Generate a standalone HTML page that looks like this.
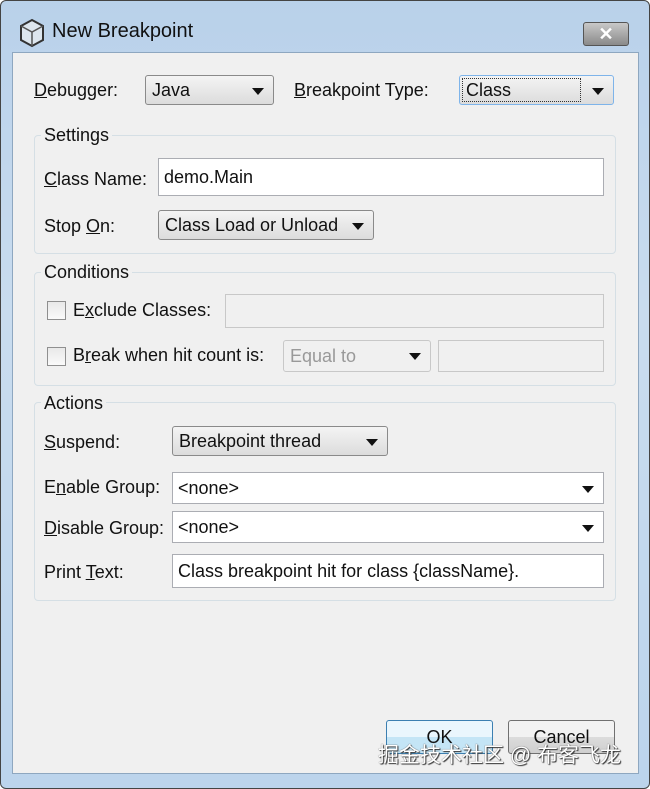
<!DOCTYPE html>
<html><head><style>
body{margin:0;width:650px;height:789px;overflow:hidden;font-family:"Liberation Sans","Noto Sans CJK SC",sans-serif;font-size:18px;color:#111}
.frame{position:absolute;left:0;top:0;width:648px;height:787px;border:1px solid #444;border-radius:6px;background:linear-gradient(#b9d1ea,#c9dcef 40%,#bcd4ec)}
.client{position:absolute;left:12px;top:52px;width:625px;height:720px;background:#f0f0f0;border:1px solid #8ea7c0}
.a{position:absolute}
.combo{position:absolute;height:30px;border:1px solid #8a8a8a;border-radius:3px;background:linear-gradient(#f4f4f4,#dcdcdc);box-sizing:border-box;padding:3px 6px;line-height:22px}
.combo:after{content:"";position:absolute;right:9px;top:12px;border:6px solid transparent;border-top:7px solid #111;border-bottom:0}
.field{position:absolute;height:38px;border:1px solid #abadb3;background:#fff;box-sizing:border-box;padding:0 5px;line-height:36px}
.dis{background:#f0f0f0;border-color:#c8c8c8}
.grp{position:absolute;border:1px solid #d5dfe5;border-radius:4px}
.gl{position:absolute;background:#f0f0f0;padding:0 3px}
.cb{position:absolute;width:17px;height:17px;border:1px solid #8f8f8f;background:linear-gradient(#e8e8e8,#fafafa)}
.ecombo{position:absolute;height:32px;border:1px solid #abadb3;background:#fff;box-sizing:border-box;padding:0 5px;line-height:30px}
.ecombo:after{content:"";position:absolute;right:9px;top:13px;border:6px solid transparent;border-top:7px solid #111;border-bottom:0}
.btn{position:absolute;width:107px;height:34px;border:1px solid #707070;border-radius:3px;background:linear-gradient(#f2f2f2 50%,#dcdcdc 50%,#cfcfcf);box-sizing:border-box;text-align:center;line-height:32px}
u{text-decoration:underline}
</style></head><body>
<div class="frame"></div>
<svg class="a" style="left:18px;top:18px" width="28" height="30" viewBox="0 0 28 30"><path d="M14 2 L25 8 L25 22 L14 28 L3 22 L3 8Z" fill="#dde6ee" stroke="#333" stroke-width="2"/><path d="M3 8 L14 14 L25 8 M14 14 V28" fill="none" stroke="#555" stroke-width="1.5"/></svg>
<div class="a" style="left:52px;top:20px;font-size:20px">New Breakpoint</div>
<div class="a" style="left:583px;top:22px;width:44px;height:22px;border:1px solid #555;border-radius:3px;background:linear-gradient(#c8c8c8,#8a8a8a);color:#fff;text-align:center;font-weight:bold;line-height:22px;font-size:18px">✕</div>
<div class="client"></div>
<div class="a" style="left:34px;top:80px"><u>D</u>ebugger:</div>
<div class="combo" style="left:145px;top:75px;width:129px">Java</div>
<div class="a" style="left:294px;top:80px"><u>B</u>reakpoint Type:</div>
<div class="combo" style="left:459px;top:75px;width:155px;border-color:#7eb4ea"><div style="position:absolute;left:3px;top:3px;width:114px;height:22px;outline:1px dotted #333;padding-left:3px">Class</div></div>

<div class="grp" style="left:34px;top:135px;width:580px;height:117px"></div>
<div class="gl" style="left:41px;top:125px">Settings</div>
<div class="a" style="left:44px;top:169px"><u>C</u>lass Name:</div>
<div class="field" style="left:158px;top:158px;width:446px">demo.Main</div>
<div class="a" style="left:44px;top:216px">Stop <u>O</u>n:</div>
<div class="combo" style="left:158px;top:210px;width:216px;padding-right:30px">Class Load or Unload</div>

<div class="grp" style="left:34px;top:272px;width:580px;height:112px"></div>
<div class="gl" style="left:41px;top:262px">Conditions</div>
<div class="cb" style="left:47px;top:301px"></div>
<div class="a" style="left:73px;top:300px">E<u>x</u>clude Classes:</div>
<div class="field dis" style="left:225px;top:294px;width:379px;height:34px"></div>
<div class="cb" style="left:47px;top:347px"></div>
<div class="a" style="left:73px;top:345px">B<u>r</u>eak when hit count is:</div>
<div class="combo" style="left:283px;top:340px;width:148px;height:32px;color:#999;border-color:#c8c8c8;background:#f0f0f0;line-height:24px">Equal to</div>
<div class="field dis" style="left:438px;top:340px;width:166px;height:32px"></div>

<div class="grp" style="left:34px;top:402px;width:580px;height:197px"></div>
<div class="gl" style="left:41px;top:393px">Actions</div>
<div class="a" style="left:44px;top:432px"><u>S</u>uspend:</div>
<div class="combo" style="left:172px;top:426px;width:216px">Breakpoint thread</div>
<div class="a" style="left:44px;top:477px">E<u>n</u>able Group:</div>
<div class="ecombo" style="left:172px;top:472px;width:432px">&lt;none&gt;</div>
<div class="a" style="left:44px;top:518px"><u>D</u>isable Group:</div>
<div class="ecombo" style="left:172px;top:511px;width:432px">&lt;none&gt;</div>
<div class="a" style="left:44px;top:562px">Print <u>T</u>ext:</div>
<div class="field" style="left:172px;top:554px;width:432px;height:34px;line-height:32px">Class breakpoint hit for class {className}.</div>

<div class="btn" style="left:386px;top:720px;border-color:#3c7fb1;background:linear-gradient(#eaf6fd 50%,#c4e5f6 50%)">OK</div>
<div class="btn" style="left:508px;top:720px">Cancel</div>
<div class="a" style="left:378px;top:739px;font-size:21px;color:#fff;text-shadow:0 0 1px #333,1px 1px 1px #333">掘金技术社区 @ 布客飞龙</div>
</body></html>
